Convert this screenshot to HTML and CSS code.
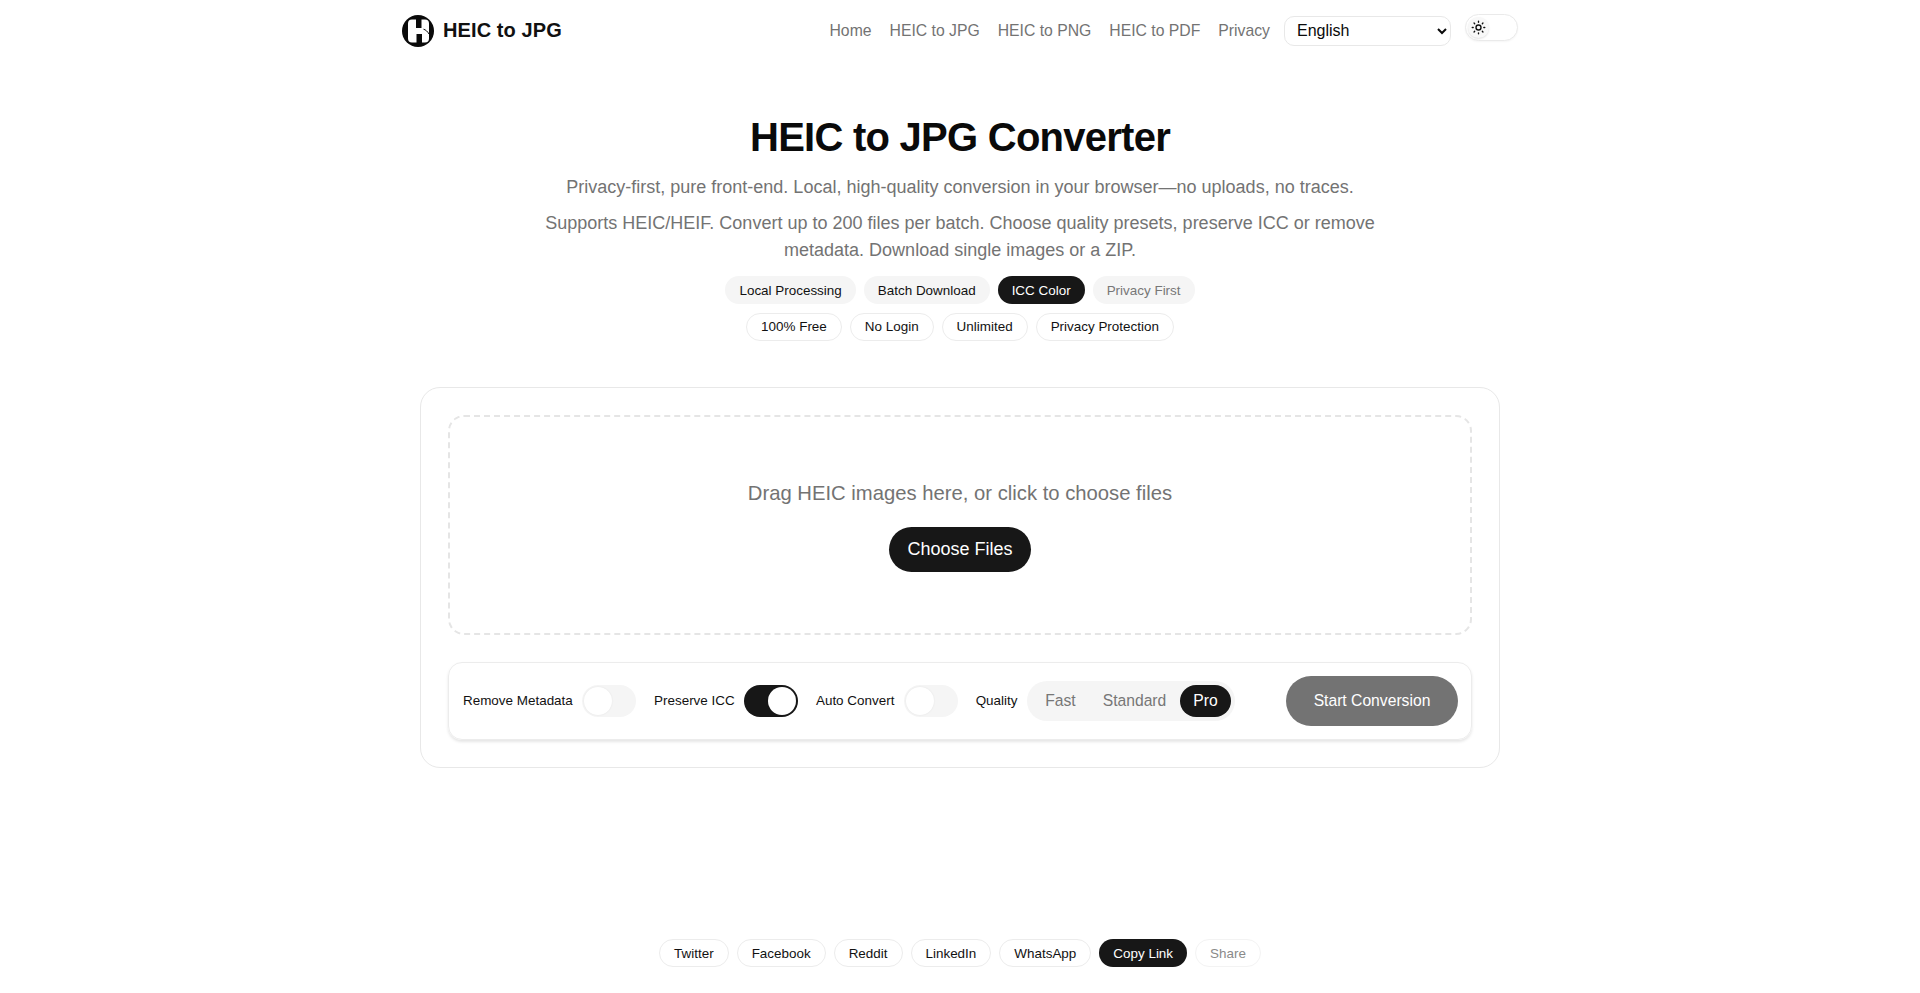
FILE: index.html
```html
<!DOCTYPE html>
<html lang="en">
<head>
<meta charset="utf-8">
<title>HEIC to JPG Converter</title>
<link rel="stylesheet" href="styles.css">
</head>
<body>
<header class="header">
  <a class="brand" href="#">
    <svg class="logo" viewBox="0 0 32 32" width="32" height="32"><circle cx="16" cy="16" r="16" fill="#0a0a0a"/><path d="M10 4.500h4v8.500h5.500V4.500H23a4 4 0 0 1 4 4V23.500a4 4 0 0 1-4 4h-3V19h-5.500v8.500H10a4 4 0 0 1-4-4V8.500a4 4 0 0 1 4-4z" fill="#fff"/><path d="M21.500 14.200c2.200.6 4 2.200 5.500 4.800" fill="none" stroke="#0a0a0a" stroke-width="1"/></svg>
    <span>HEIC to JPG</span>
  </a>
  <nav class="nav">
    <a href="#">Home</a><a href="#">HEIC to JPG</a><a href="#">HEIC to PNG</a><a href="#">HEIC to PDF</a><a href="#">Privacy</a>
  </nav>
  <select class="lang"><option>English</option></select>
  <button class="theme">
    <span class="theme-knob">
      <svg viewBox="0 0 24 24" width="15" height="15" fill="none" stroke="#111" stroke-width="2.200" stroke-linecap="round"><circle cx="12" cy="12" r="4"/><path d="M12 2v1.500M12 20.500v1.500M4.900 4.900l1 1M18.100 18.100l1 1M2 12h1.500M20.500 12h1.500M4.900 19.100l1-1M18.100 5.900l1-1"/></svg>
    </span>
  </button>
</header>
<main class="main">
  <section class="hero">
    <h1>HEIC to JPG Converter</h1>
    <p class="lead">Privacy-first, pure front-end. Local, high-quality conversion in your browser—no uploads, no traces.</p>
    <p class="lead sub">Supports HEIC/HEIF. Convert up to 200 files per batch. Choose quality presets, preserve ICC or remove metadata. Download single images or a ZIP.</p>
    <div class="chips chips-first">
      <span class="chip soft">Local Processing</span><span class="chip soft">Batch Download</span><span class="chip dark">ICC Color</span><span class="chip soft muted">Privacy First</span>
    </div>
    <div class="chips">
      <span class="chip line">100% Free</span><span class="chip line">No Login</span><span class="chip line">Unlimited</span><span class="chip line">Privacy Protection</span>
    </div>
  </section>
  <section class="card">
    <div class="drop">
      <p class="drop-text">Drag HEIC images here, or click to choose files</p>
      <button class="choose">Choose Files</button>
    </div>
    <div class="controls">
      <span class="ctl-label">Remove Metadata</span><span class="switch"><i></i></span>
      <span class="ctl-label">Preserve ICC</span><span class="switch on"><i></i></span>
      <span class="ctl-label">Auto Convert</span><span class="switch"><i></i></span>
      <span class="ctl-label">Quality</span>
      <span class="seg"><b>Fast</b><b>Standard</b><b class="active">Pro</b></span>
      <button class="start">Start Conversion</button>
    </div>
  </section>
</main>
<footer class="share">
  <a class="chip line">Twitter</a><a class="chip line">Facebook</a><a class="chip line">Reddit</a><a class="chip line">LinkedIn</a><a class="chip line">WhatsApp</a><a class="chip dark">Copy Link</a><a class="chip line faded">Share</a>
</footer>
</body>
</html>
```
FILE: styles.css
```css
* { box-sizing: border-box; }
html, body { margin: 0; height: 100%; }
body { font-family: "Liberation Sans", Arial, sans-serif; background: #fff; color: #0a0a0a; display: flex; flex-direction: column; height: 993px; overflow: hidden; }
a { text-decoration: none; color: inherit; }
.header { width: 1116px; margin: 0 auto; height: 61px; display: flex; align-items: center; flex: none; }
.brand { display: flex; align-items: center; gap: 9px; font-size: 20px; font-weight: 700; letter-spacing: .1px; color: #111; }
.logo { display: block; }
.nav { margin-left: auto; display: flex; gap: 18px; font-size: 15.760px; color: #737373; }
.lang { margin-left: 14px; width: 167px; height: 30px; border: 1px solid #e8e8e8; border-radius: 10px; background: #fff; padding: 0 8px; font: 16px "Liberation Sans", Arial, sans-serif; color: #0a0a0a; }
.theme { margin-left: 14px; width: 53px; height: 27px; padding: 2px; margin-top: -6px; border: 1px solid #eaeaea; border-radius: 14px; background: #fff; display: flex; align-items: center; box-shadow: 0 1px 2px rgba(0,0,0,.04); }
.theme-knob { width: 21px; height: 21px; border-radius: 50%; background: #f8f8f8; display: flex; align-items: center; justify-content: center; box-shadow: 0 1px 2px rgba(0,0,0,.12); }
.main { flex: 1; display: flex; flex-direction: column; align-items: center; }
.hero { text-align: center; padding-top: 52px; width: 860px; }
h1 { margin: 0; font-size: 40px; line-height: 48px; font-weight: 700; letter-spacing: -.75px; color: #0a0a0a; }
.lead { margin: 13px 0 0; font-size: 18px; line-height: 27px; color: #737373; }
.sub { margin-top: 9px; }
.chips { display: flex; justify-content: center; gap: 8px; margin-top: 9px; }
.chips-first { margin-top: 12px; }
.chip { display: inline-flex; align-items: center; height: 28px; padding: 0 14px; border-radius: 14px; font-size: 13.440px; color: #111; }
.chips .line { padding-bottom: 1px; }
.soft { background: #f5f5f5; }
.muted { color: #777; }
.dark { background: #171717; color: #fff; }
.line { border: 1px solid #ececec; background: #fff; }
.faded { color: #8a8a8a; border-color: #f3f3f3; }
.card { margin-top: 46px; width: 1080px; height: 381px; border: 1px solid #e8e8e8; border-radius: 20px; padding: 27px; display: flex; flex-direction: column; }
.drop { height: 221px; border: 2px dashed #e5e5e5; border-radius: 16px; display: flex; flex-direction: column; align-items: center; justify-content: center; }
.drop-text { margin: 0 0 20px; font-size: 20.250px; line-height: 28px; color: #737373; }
.choose { width: 142px; height: 45px; border: 0; border-radius: 23px; background: #171717; color: #fff; font: 18px "Liberation Sans", Arial, sans-serif; }
.controls { margin-top: 27px; height: 78px; border: 1px solid #ececec; border-radius: 14px; box-shadow: 0 2px 3px rgba(0,0,0,.1); padding: 0 13px 0 14px; display: flex; align-items: center; }
.ctl-label { font-size: 13.440px; color: #111; margin-right: 9.250px; position: relative; top: -1px; }
.switch { width: 54px; height: 32px; border-radius: 16px; background: #f5f5f5; padding: 2px; margin-right: 18px; flex: none; display: flex; }
.switch i { width: 28px; height: 28px; border-radius: 50%; background: #fff; box-shadow: 0 0 2px rgba(0,0,0,.08); }
.switch.on { background: #171717; justify-content: flex-end; }
.seg { display: flex; align-items: center; height: 40px; border-radius: 20px; background: #f5f5f5; padding: 0 4px 0 5px; font-size: 15.680px; }
.seg b { font-weight: 400; color: #777; padding: 0 13.500px; height: 32px; line-height: 32px; border-radius: 16px; }
.seg .active { background: #171717; color: #fff; }
.start { margin-left: auto; width: 172px; height: 50px; border: 0; border-radius: 25px; background: #737373; color: #fff; font: 15.680px "Liberation Sans", Arial, sans-serif; }
.share { flex: none; display: flex; justify-content: center; gap: 8px; height: 54px; }
```
